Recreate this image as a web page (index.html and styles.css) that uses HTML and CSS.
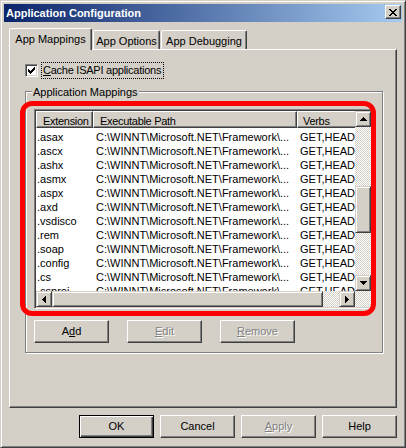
FILE: index.html
```html
<!DOCTYPE html>
<html>
<head>
<meta charset="utf-8">
<title>Application Configuration</title>
<link rel="stylesheet" href="styles.css">
</head>
<body>
<div class="window">
  <div class="titlebar">
    <span class="title">Application Configuration</span>
    <span class="close"><svg width="8" height="7" viewBox="0 0 8 7" shape-rendering="crispEdges"><path d="M0 0h2v1H0z M6 0h2v1H6z M1 1h2v1H1z M5 1h2v1H5z M2 2h4v1H2z M3 3h2v1H3z M2 4h4v1H2z M1 5h2v1H1z M5 5h2v1H5z M0 6h2v1H0z M6 6h2v1H6z" fill="#000"/></svg></span>
  </div>
  <div class="client">
    <div class="tabs">
      <div class="tab active t1">App Mappings</div>
      <div class="tab t2">App Options</div>
      <div class="tab t3">App Debugging</div>
    </div>
    <div class="panel">
      <div class="check-row">
        <span class="checkbox"><svg width="7" height="7" viewBox="0 0 7 7" shape-rendering="crispEdges"><path d="M6 0h1v1H6z M5 1h2v1H5z M0 2h1v1H0z M4 2h3v1H4z M0 3h2v1H0z M3 3h3v1H3z M0 4h5v1H0z M1 5h3v1H1z M2 6h1v1H2z" fill="#000"/></svg></span>
        <span class="check-label"><u>C</u>ache ISAPI applications</span>
      </div>
      <div class="group">
        <div class="group-label">Application Mappings</div>
        <div class="listview">
          <div class="lv-main">
            <div class="lv-header">
              <div class="hcell w1">Extension</div>
              <div class="hcell w2">Executable Path</div>
              <div class="hcell w3 h3">Verbs</div>
            </div>
            <div class="lv-row"><div class="cell w1 c1">.asax</div><div class="cell w2">C:\WINNT\Microsoft.NET\Framework\...</div><div class="cell w3">GET,HEAD</div></div>
            <div class="lv-row"><div class="cell w1 c1">.ascx</div><div class="cell w2">C:\WINNT\Microsoft.NET\Framework\...</div><div class="cell w3">GET,HEAD</div></div>
            <div class="lv-row"><div class="cell w1 c1">.ashx</div><div class="cell w2">C:\WINNT\Microsoft.NET\Framework\...</div><div class="cell w3">GET,HEAD</div></div>
            <div class="lv-row"><div class="cell w1 c1">.asmx</div><div class="cell w2">C:\WINNT\Microsoft.NET\Framework\...</div><div class="cell w3">GET,HEAD</div></div>
            <div class="lv-row"><div class="cell w1 c1">.aspx</div><div class="cell w2">C:\WINNT\Microsoft.NET\Framework\...</div><div class="cell w3">GET,HEAD</div></div>
            <div class="lv-row"><div class="cell w1 c1">.axd</div><div class="cell w2">C:\WINNT\Microsoft.NET\Framework\...</div><div class="cell w3">GET,HEAD</div></div>
            <div class="lv-row"><div class="cell w1 c1">.vsdisco</div><div class="cell w2">C:\WINNT\Microsoft.NET\Framework\...</div><div class="cell w3">GET,HEAD</div></div>
            <div class="lv-row"><div class="cell w1 c1">.rem</div><div class="cell w2">C:\WINNT\Microsoft.NET\Framework\...</div><div class="cell w3">GET,HEAD</div></div>
            <div class="lv-row"><div class="cell w1 c1">.soap</div><div class="cell w2">C:\WINNT\Microsoft.NET\Framework\...</div><div class="cell w3">GET,HEAD</div></div>
            <div class="lv-row"><div class="cell w1 c1">.config</div><div class="cell w2">C:\WINNT\Microsoft.NET\Framework\...</div><div class="cell w3">GET,HEAD</div></div>
            <div class="lv-row"><div class="cell w1 c1">.cs</div><div class="cell w2">C:\WINNT\Microsoft.NET\Framework\...</div><div class="cell w3">GET,HEAD</div></div>
            <div class="lv-row"><div class="cell w1 c1">.csproj</div><div class="cell w2">C:\WINNT\Microsoft.NET\Framework\...</div><div class="cell w3">GET,HEAD</div></div>
          </div>
          <div class="vscroll">
            <div class="sb-btn"><svg width="7" height="4" viewBox="0 0 7 4" shape-rendering="crispEdges"><path d="M3 0h1v1h1v1h1v1h1v1H0V3h1V2h1V1h1z" fill="#000"/></svg></div>
            <div class="v-gap"></div>
            <div class="sb-thumb v-thumb"></div>
            <div class="v-rest"></div>
            <div class="sb-btn"><svg width="7" height="4" viewBox="0 0 7 4" shape-rendering="crispEdges"><path d="M0 0h7v1h-1v1h-1v1h-1v1H3V3H2V2H1V1H0z" fill="#000"/></svg></div>
          </div>
          <div class="hscroll">
            <div class="sb-btn"><svg width="4" height="7" viewBox="0 0 4 7" shape-rendering="crispEdges"><path d="M4 0h-1v1h-1v1h-1v1H0v1h1v1h1v1h1v1h1z" fill="#000"/></svg></div>
            <div class="sb-thumb h-thumb"></div>
            <div class="h-rest"></div>
            <div class="sb-btn"><svg width="4" height="7" viewBox="0 0 4 7" shape-rendering="crispEdges"><path d="M0 0h1v1h1v1h1v1h1v1h-1v1h-1v1h-1v1H0z" fill="#000"/></svg></div>
          </div>
          <div class="lv-corner"></div>
        </div>
        <div class="group-buttons">
          <div class="btn">A<u>d</u>d</div>
          <div class="btn disabled"><u>E</u>dit</div>
          <div class="btn disabled"><u>R</u>emove</div>
        </div>
      </div>
    </div>
    <div class="dialog-buttons">
      <div class="btn default">OK</div>
      <div class="btn">Cancel</div>
      <div class="btn disabled"><u>A</u>pply</div>
      <div class="btn">Help</div>
    </div>
  </div>
  <div class="annotation"></div>
</div>
</body>
</html>
```
FILE: styles.css
```css
* { box-sizing: border-box; }
html, body { margin: 0; padding: 0; }
body {
  width: 406px;
  height: 448px;
  overflow: hidden;
  background: #D4D0C8;
  font-family: "Liberation Sans", Arial, sans-serif;
  font-size: 11px;
  color: #000;
}
u { text-decoration: underline; text-underline-offset: 1px; }

.window {
  position: relative;
  width: 406px;
  height: 448px;
  background: #D4D0C8;
  border: 1px solid;
  border-color: #D4D0C8 #404040 #404040 #D4D0C8;
  box-shadow: inset 1px 1px #fff, inset -1px -1px #808080;
  padding: 3px;
}

.titlebar {
  height: 18px;
  display: flex;
  align-items: flex-start;
  justify-content: space-between;
  padding: 0 1px 0 2px;
  background: linear-gradient(to right, #0A246A, #A6CAF0);
  color: #fff;
}
.title {
  font-weight: bold;
  line-height: 18px;
  white-space: nowrap;
}
.close {
  width: 16px;
  height: 14px;
  margin-top: 1px;
  display: flex;
  align-items: center;
  justify-content: center;
  background: #D4D0C8;
  border: 1px solid;
  border-color: #fff #404040 #404040 #fff;
  box-shadow: inset -1px -1px #808080;
}

.client { padding: 6px 5px 0; }

.tabs {
  display: flex;
  align-items: flex-end;
  height: 22px;
}
.tab {
  height: 19px;
  margin-bottom: 1px;
  padding-top: 4px;
  line-height: 13px;
  text-align: center;
  white-space: nowrap;
  background: #D4D0C8;
  border: 1px solid;
  border-bottom: none;
  border-color: #fff #404040 transparent #fff;
  box-shadow: inset -1px 0 #808080;
  border-top-left-radius: 2px;
  border-top-right-radius: 2px;
}
.tab.active {
  height: 22px;
  margin-bottom: 0;
  position: relative;
  z-index: 1;
}
.t1 { width: 83px; }
.t2 { width: 67px; margin-left: 1px; }
.t3 { width: 86px; margin-left: 1px; }

.panel {
  margin-top: -1px;
  height: 359px;
  border: 1px solid;
  border-color: #fff #404040 #404040 #fff;
  box-shadow: inset -1px -1px #808080;
  padding: 12px 0 0 15px;
}

.check-row {
  display: flex;
  align-items: center;
  height: 17px;
}
.checkbox {
  width: 13px;
  height: 13px;
  flex: none;
  display: flex;
  align-items: center;
  justify-content: center;
  background: #fff;
  border: 1px solid;
  border-color: #808080 #fff #fff #808080;
  box-shadow: inset 1px 1px #404040, inset -1px -1px #D4D0C8;
}
.check-label {
  margin-left: 3px;
  height: 17px;
  line-height: 15px;
  padding: 0 2px 0 1px;
  border: 1px dotted #000;
  white-space: nowrap;
  letter-spacing: -0.25px;
}

.group {
  margin-top: 12px;
  width: 358px;
  height: 262px;
  border: 1px solid #808080;
  box-shadow: inset 1px 1px #fff, 1px 1px #fff;
  padding-left: 8px;
}
.group-label {
  width: fit-content;
  margin-top: -6px;
  margin-left: -2px;
  padding: 0 1px;
  height: 13px;
  line-height: 13px;
  background: #D4D0C8;
  white-space: nowrap;
}

.listview {
  margin-top: 10px;
  width: 339px;
  height: 200px;
  display: grid;
  grid-template-columns: 1fr 16px;
  grid-template-rows: 1fr 16px;
  padding: 1px;
  background: #fff;
  border: 1px solid;
  border-color: #808080 #fff #fff #808080;
  box-shadow: inset 1px 1px #404040, inset -1px -1px #D4D0C8;
}
.lv-main {
  min-width: 0;
  min-height: 0;
  overflow: hidden;
  background: #fff;
}
.lv-header {
  display: flex;
  height: 17px;
}
.hcell {
  flex: none;
  height: 17px;
  padding: 2px 0 0 6px;
  line-height: 14px;
  white-space: nowrap;
  overflow: hidden;
  letter-spacing: -0.3px;
  background: #D4D0C8;
  border: 1px solid;
  border-color: #fff #404040 #404040 #fff;
  box-shadow: inset -1px -1px #808080;
}
.hcell.h3 { padding-left: 5px; }
.w1 { width: 57px; }
.w2 { width: 204px; }
.w3 { width: 100px; }

.lv-row {
  display: flex;
  height: 14px;
}
.cell {
  flex: none;
  height: 16px;
  padding: 2px 0 0 3px;
  line-height: 14px;
  white-space: nowrap;
  overflow: hidden;
}
.cell.c1 { padding-left: 1px; }

.vscroll, .hscroll, .lv-corner {
  background-color: #D4D0C8;
  background-image: repeating-conic-gradient(#fff 0 25%, #D4D0C8 0 50%);
  background-size: 2px 2px;
}
.vscroll {
  display: flex;
  flex-direction: column;
}
.hscroll { display: flex; }
.sb-btn, .sb-thumb {
  flex: none;
  background: #D4D0C8;
  border: 1px solid;
  border-color: #D4D0C8 #404040 #404040 #D4D0C8;
  box-shadow: inset 1px 1px #fff, inset -1px -1px #808080;
}
.sb-btn {
  width: 16px;
  height: 16px;
  display: flex;
  align-items: center;
  justify-content: center;
}
.v-gap { height: 59px; flex: none; }
.v-thumb { width: 16px; height: 47px; }
.v-rest { flex: 1; }
.h-thumb { width: 271px; height: 16px; }
.h-rest { flex: 1; }

.group-buttons {
  display: flex;
  gap: 18px;
  margin-top: 11px;
}
.btn {
  width: 75px;
  height: 23px;
  flex: none;
  display: flex;
  align-items: center;
  justify-content: center;
  line-height: 13px;
  background: #D4D0C8;
  border: 1px solid;
  border-color: #fff #404040 #404040 #fff;
  box-shadow: inset -1px -1px #808080;
  white-space: nowrap;
}
.btn.default {
  border-color: #000;
  box-shadow: inset 1px 1px #fff, inset -1px -1px #404040, inset -2px -2px #808080;
}
.btn.disabled {
  color: #808080;
  text-shadow: 1px 1px 0 #fff;
}

.dialog-buttons {
  display: flex;
  justify-content: flex-end;
  gap: 6px;
  margin-top: 7px;
}

.annotation {
  position: absolute;
  left: 19px;
  top: 100px;
  width: 356px;
  height: 215px;
  border: 5px solid #ff0000;
  border-radius: 12px;
  pointer-events: none;
}
```
